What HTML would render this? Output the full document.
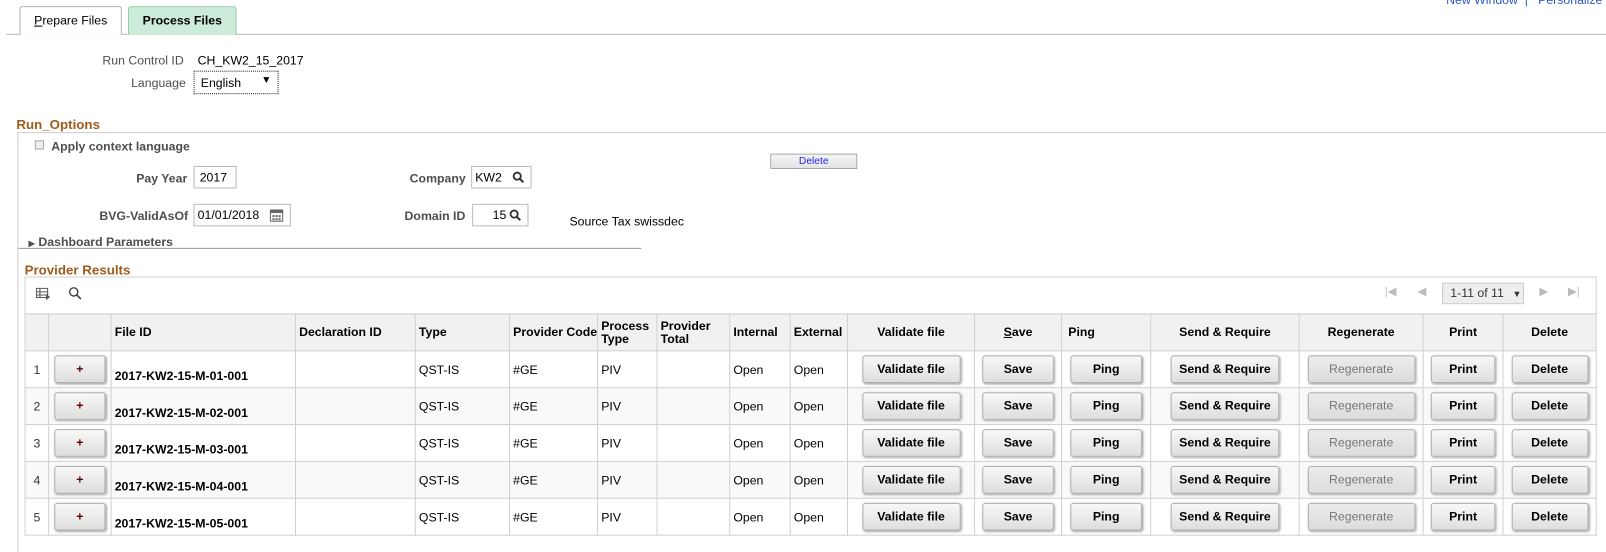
<!DOCTYPE html>
<html><head><meta charset="utf-8"><style>
*{box-sizing:border-box}
body{margin:0;width:1606px;height:531px;overflow:hidden;background:#fff;font-family:"Liberation Sans",Arial,sans-serif;font-size:12px;color:#000;position:relative}
#w{position:absolute;left:0;top:0;width:1568px;height:520px;transform:scale(1.0242);transform-origin:0 0}
.a{position:absolute;white-space:nowrap}
.lbl{color:#4e4e4e}
.tab{position:absolute;top:6px;height:28px;border:1px solid #aaa;border-bottom:none;border-radius:3px 3px 0 0;font-size:12px;text-align:center;line-height:26px}
.inp{position:absolute;border:1px solid #bbb;background:#fff;height:22px;line-height:20px;padding-left:5px}
.hdr{color:#a05a1c;font-weight:bold;font-size:13px}
table{position:absolute;left:24px;top:306px;border-collapse:collapse;table-layout:fixed;width:1535px}
td,th{border:1px solid #d0d0d0;height:36px;padding:0 3px;font-size:12px;overflow:hidden;white-space:nowrap}
th{background:#f1f1f1;text-align:left;font-weight:bold;line-height:13px}
th.c{text-align:center}
tr.e td{background:#f9f9f9}
td.c{text-align:center}
.b{display:inline-block;height:27px;line-height:25px;border:1px solid #b0b0b0;border-radius:3px;background:linear-gradient(#f8f8f8,#dedede);box-shadow:1px 1px 2px #aaa;font-weight:bold;text-align:center}
.b.dis{color:#777;font-weight:normal;background:linear-gradient(#ececec,#dcdcdc)}
.fid{font-weight:bold;padding-top:12px}
svg{position:absolute}
</style></head><body><div id="w">
<div class="a" style="left:1412px;top:-7px;color:#2e59c9;font-size:12px">New Window &nbsp;| &nbsp; Personalize P</div>
<div class="a" style="left:6px;top:33px;width:1600px;border-top:1px solid #bbb"></div>
<div class="tab" style="left:19px;width:100px;background:#fff"><u>P</u>repare Files</div>
<div class="tab" style="left:125px;width:106px;background:#cdebdb;border-color:#8dc8a6;font-weight:bold">Process Files</div>

<div class="a lbl" style="left:100px;top:52px">Run Control ID</div>
<div class="a" style="left:193px;top:52px">CH_KW2_15_2017</div>
<div class="a lbl" style="left:128px;top:74px">Language</div>
<div class="a" style="left:189px;top:69px;width:83px;height:23px;border:1px dotted #223;padding:4px 0 0 6px">English<span style="position:absolute;right:6px;top:3px;font-size:10px">▼</span></div>

<div class="a hdr" style="left:16px;top:114px">Run_Options</div>
<div class="a" style="left:17px;top:129px;width:1600px;height:410px;border-left:1px solid #ccc;border-top:1px solid #ccc"></div>
<div class="a" style="left:34px;top:137px;width:9px;height:9px;border:1px solid #aaa;background:#eee"></div>
<div class="a lbl" style="left:50px;top:136px;font-weight:bold">Apply context language</div>
<div class="a" style="left:752px;top:150px;width:85px;height:15px;border:1px solid #aaa;background:linear-gradient(#f5f5f5,#e3e3e3);color:#2222ee;font-size:10px;text-align:center;line-height:13px">Delete</div>

<div class="a lbl" style="left:133px;top:167px;font-weight:bold">Pay Year</div>
<div class="inp" style="left:189px;top:162px;width:42px;">2017</div>
<div class="a lbl" style="left:400px;top:167px;font-weight:bold">Company</div>
<div class="inp" style="left:460px;top:162px;width:59px;padding-left:3px">KW2</div>
<div class="a lbl" style="left:97px;top:204px;font-weight:bold">BVG-ValidAsOf</div>
<div class="inp" style="left:189px;top:199px;width:95px;padding-left:3px">01/01/2018</div>
<svg style="left:263px;top:203px" width="14" height="14"><rect x="1" y="2" width="12" height="11" fill="none" stroke="#666"/><rect x="1" y="2" width="12" height="3" fill="#666"/><g fill="#666"><rect x="3" y="7" width="2" height="2"/><rect x="6" y="7" width="2" height="2"/><rect x="9" y="7" width="2" height="2"/><rect x="3" y="10" width="2" height="2"/><rect x="6" y="10" width="2" height="2"/><rect x="9" y="10" width="2" height="2"/></g></svg>
<div class="a lbl" style="left:395px;top:204px;font-weight:bold">Domain ID</div>
<div class="inp" style="left:461px;top:199px;width:55px;padding-left:19px">15</div>
<svg style="left:497px;top:204px" width="12" height="12"><circle cx="5" cy="5" r="3.5" fill="none" stroke="#333" stroke-width="1.8"/><line x1="7.5" y1="7.5" x2="11" y2="11" stroke="#333" stroke-width="2"/></svg>
<svg style="left:500px;top:167px" width="12" height="12"><circle cx="5" cy="5" r="3.5" fill="none" stroke="#333" stroke-width="1.8"/><line x1="7.5" y1="7.5" x2="11" y2="11" stroke="#333" stroke-width="2"/></svg>
<div class="a" style="left:556px;top:209px">Source Tax swissdec</div>
<div class="a lbl" style="left:28px;top:229px;font-weight:bold"><span style="font-size:8px">▶</span> Dashboard Parameters</div>
<div class="a" style="left:18px;top:242px;width:608px;border-top:1px solid #999"></div>

<div class="a hdr" style="left:24px;top:256px">Provider Results</div>
<div class="a" style="left:24px;top:270px;width:1535px;height:37px;border:1px solid #d0d0d0"></div>
<svg style="left:35px;top:281px" width="14" height="12"><g fill="none" stroke="#555"><rect x="0.5" y="0.5" width="11" height="9"/><line x1="0" y1="4" x2="12" y2="4"/><line x1="0" y1="7" x2="12" y2="7"/><line x1="4" y1="0" x2="4" y2="10"/></g><path d="M10 6 L14 9 L10 12Z" fill="#555"/></svg>
<svg style="left:67px;top:280px" width="13" height="13"><circle cx="5" cy="5" r="4" fill="none" stroke="#444" stroke-width="1.4"/><line x1="8" y1="8" x2="12" y2="12" stroke="#444" stroke-width="1.6"/></svg>
<div class="a" style="left:1352px;top:278px;color:#bbb;font-size:11px">|◀</div>
<div class="a" style="left:1384px;top:278px;color:#bbb;font-size:11px">◀</div>
<div class="a" style="left:1408px;top:276px;width:80px;height:21px;border:1px solid #ccc;background:#eee;line-height:19px;padding-left:7px;color:#333">1-11 of 11 <span style="font-size:9px;margin-left:5px">▼</span></div>
<div class="a" style="left:1503px;top:278px;color:#bbb;font-size:11px">▶</div>
<div class="a" style="left:1531px;top:278px;color:#bbb;font-size:11px">▶|</div>

<table>
<colgroup><col style="width:23px"><col style="width:61px"><col style="width:180px"><col style="width:117px"><col style="width:92px"><col style="width:86px"><col style="width:58px"><col style="width:71px"><col style="width:59px"><col style="width:56px"><col style="width:124px"><col style="width:85px"><col style="width:87px"><col style="width:145px"><col style="width:121px"><col style="width:78px"><col style="width:91px"></colgroup>
<tr><th></th><th></th><th>File ID</th><th>Declaration ID</th><th>Type</th><th>Provider Code</th><th>Process<br>Type</th><th>Provider<br>Total</th><th>Internal</th><th>External</th><th class="c">Validate file</th><th class="c"><u>S</u>ave</th><th style="padding-left:6px">Ping</th><th class="c">Send &amp; Require</th><th class="c">Regenerate</th><th class="c">Print</th><th class="c">Delete</th></tr>
<tr><td class="c" style="color:#333">1</td><td class="c"><span class="b" style="width:50px;color:#600">+</span></td><td class="fid">2017-KW2-15-M-01-001</td><td></td><td>QST-IS</td><td>#GE</td><td>PIV</td><td></td><td>Open</td><td>Open</td><td class="c"><span class="b" style="width:96px">Validate file</span></td><td class="c"><span class="b" style="width:70px">Save</span></td><td class="c"><span class="b" style="width:70px">Ping</span></td><td class="c"><span class="b" style="width:106px">Send &amp; Require</span></td><td class="c"><span class="b dis" style="width:105px">Regenerate</span></td><td class="c"><span class="b" style="width:63px">Print</span></td><td class="c"><span class="b" style="width:75px">Delete</span></td></tr>
<tr class="e"><td class="c" style="color:#333">2</td><td class="c"><span class="b" style="width:50px;color:#600">+</span></td><td class="fid">2017-KW2-15-M-02-001</td><td></td><td>QST-IS</td><td>#GE</td><td>PIV</td><td></td><td>Open</td><td>Open</td><td class="c"><span class="b" style="width:96px">Validate file</span></td><td class="c"><span class="b" style="width:70px">Save</span></td><td class="c"><span class="b" style="width:70px">Ping</span></td><td class="c"><span class="b" style="width:106px">Send &amp; Require</span></td><td class="c"><span class="b dis" style="width:105px">Regenerate</span></td><td class="c"><span class="b" style="width:63px">Print</span></td><td class="c"><span class="b" style="width:75px">Delete</span></td></tr>
<tr><td class="c" style="color:#333">3</td><td class="c"><span class="b" style="width:50px;color:#600">+</span></td><td class="fid">2017-KW2-15-M-03-001</td><td></td><td>QST-IS</td><td>#GE</td><td>PIV</td><td></td><td>Open</td><td>Open</td><td class="c"><span class="b" style="width:96px">Validate file</span></td><td class="c"><span class="b" style="width:70px">Save</span></td><td class="c"><span class="b" style="width:70px">Ping</span></td><td class="c"><span class="b" style="width:106px">Send &amp; Require</span></td><td class="c"><span class="b dis" style="width:105px">Regenerate</span></td><td class="c"><span class="b" style="width:63px">Print</span></td><td class="c"><span class="b" style="width:75px">Delete</span></td></tr>
<tr class="e"><td class="c" style="color:#333">4</td><td class="c"><span class="b" style="width:50px;color:#600">+</span></td><td class="fid">2017-KW2-15-M-04-001</td><td></td><td>QST-IS</td><td>#GE</td><td>PIV</td><td></td><td>Open</td><td>Open</td><td class="c"><span class="b" style="width:96px">Validate file</span></td><td class="c"><span class="b" style="width:70px">Save</span></td><td class="c"><span class="b" style="width:70px">Ping</span></td><td class="c"><span class="b" style="width:106px">Send &amp; Require</span></td><td class="c"><span class="b dis" style="width:105px">Regenerate</span></td><td class="c"><span class="b" style="width:63px">Print</span></td><td class="c"><span class="b" style="width:75px">Delete</span></td></tr>
<tr><td class="c" style="color:#333">5</td><td class="c"><span class="b" style="width:50px;color:#600">+</span></td><td class="fid">2017-KW2-15-M-05-001</td><td></td><td>QST-IS</td><td>#GE</td><td>PIV</td><td></td><td>Open</td><td>Open</td><td class="c"><span class="b" style="width:96px">Validate file</span></td><td class="c"><span class="b" style="width:70px">Save</span></td><td class="c"><span class="b" style="width:70px">Ping</span></td><td class="c"><span class="b" style="width:106px">Send &amp; Require</span></td><td class="c"><span class="b dis" style="width:105px">Regenerate</span></td><td class="c"><span class="b" style="width:63px">Print</span></td><td class="c"><span class="b" style="width:75px">Delete</span></td></tr>
</table>
</div></body></html>
